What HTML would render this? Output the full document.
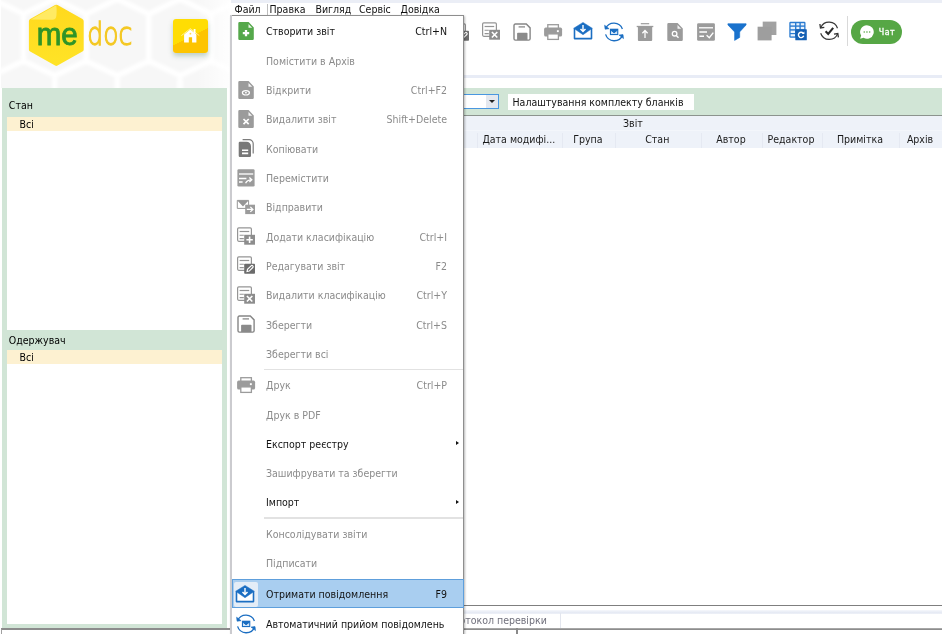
<!DOCTYPE html>
<html lang="uk"><head><meta charset="utf-8"><title>M.E.Doc</title>
<style>
html,body{margin:0;padding:0}
body{width:942px;height:634px;position:relative;overflow:hidden;background:#fff;font-family:"DejaVu Sans Condensed","DejaVu Sans","Liberation Sans",sans-serif;font-stretch:condensed;font-size:10.5px;color:#000;line-height:15px}
div,svg{position:absolute;box-sizing:border-box}
.ic{position:absolute;overflow:visible}
#hl{left:1.3px;top:0;width:228.7px;height:88px;background:#f7f7f7;overflow:hidden}
#lp{left:2px;top:88px;width:225px;height:540px;background:#d1e5d6}
.lbl{left:8.8px;white-space:nowrap}
.box{left:6.5px;width:215px;background:#fff}
.sel{left:6.5px;width:215px;height:14px;background:#fdf1d1}
.mb{top:2px;white-space:nowrap;color:#111}
#pop{left:230.2px;top:15px;width:233.8px;height:640px;background:#fff;border:1px solid #c9c9cf;border-left:none;border-top-color:#8e8e8e;border-right-color:#8e8e8e;box-shadow:1px 1px 2px rgba(0,0,0,.28)}
.mi{left:266px;white-space:nowrap;color:#131313;height:15px}
.mi.dis{color:#8b8b8b}
.mi.sc{left:auto;right:495px;text-align:right}
.arr{left:455.6px;width:0;height:0;border-left:3px solid #111;border-top:2.8px solid transparent;border-bottom:2.8px solid transparent}
.sep{left:264.3px;width:199px;height:1.2px;background:#e2e2e2}
.hl{left:232px;width:231.5px;height:29.4px;background:#a9cef0;border:1px solid #5e9fdc}
.hlic{left:233.5px;width:24px;height:24.5px;background:#e4edf7;border-radius:2px}
.ch{top:132px;width:80px;text-align:center;white-space:nowrap;color:#1a1a1a}
.cd{top:133px;width:1px;height:15px;background:#e5e9f2}
#root{left:0;top:0;width:942px;height:634px;will-change:transform;overflow:hidden}
</style></head><body>
<div id="root">

<!-- header left with honeycomb -->
<div id="hl">
<svg width="230" height="88" viewBox="0 0 230 88" style="left:0;top:0">
<defs><filter id="bl" x="-5%" y="-5%" width="110%" height="110%"><feGaussianBlur stdDeviation="1.4"/></filter></defs>
<path d="M-40.1 14V61M-40.1 14L-71.4 -1M-40.1 14L-8.8 -1M-40.1 61L-71.4 75.5M-40.1 61L-8.8 75.5M-8.8 75.5V92M22.5 14V61M22.5 14L-8.8 -1M22.5 14L53.8 -1M22.5 61L-8.8 75.5M22.5 61L53.8 75.5M53.8 75.5V92M85.1 14V61M85.1 14L53.8 -1M85.1 14L116.4 -1M85.1 61L53.8 75.5M85.1 61L116.4 75.5M116.4 75.5V92M147.7 14V61M147.7 14L116.4 -1M147.7 14L179.0 -1M147.7 61L116.4 75.5M147.7 61L179.0 75.5M179.0 75.5V92M210.3 14V61M210.3 14L179.0 -1M210.3 14L241.6 -1M210.3 61L179.0 75.5M210.3 61L241.6 75.5M241.6 75.5V92M272.9 14V61M272.9 14L241.6 -1M272.9 14L304.2 -1M272.9 61L241.6 75.5M272.9 61L304.2 75.5M304.2 75.5V92" fill="none" stroke="#fff" stroke-width="5.5" stroke-linecap="round" filter="url(#bl)"/>
</svg>
<div style="left:196px;top:0;width:34px;height:88px;background:linear-gradient(90deg,rgba(255,255,255,0),rgba(255,255,255,.9))"></div>
</div>

<!-- logo -->
<svg style="left:24px;top:0" width="120" height="72" viewBox="24 0 120 72">
<defs><linearGradient id="hx" x1="0" y1="0" x2="0" y2="1"><stop offset="0" stop-color="#ffd91e"/><stop offset="1" stop-color="#ffe326"/></linearGradient></defs>
<path d="M56.3 7.3L81.2 21.3V49.4L56.3 63.4 31.4 49.4V21.3z" fill="url(#hx)" stroke="url(#hx)" stroke-width="5" stroke-linejoin="round"/>
<path d="M31 19.6L56.2 5.2c.6 3 .6 7 .2 10.600a4.200 4.200 0 0 1-4.200 3.900z" fill="#ffea63"/>
<text x="36.8" y="44.6" font-family="'Liberation Sans','DejaVu Sans',sans-serif" font-size="31" fill="#2f9428" stroke="#2f9428" stroke-width=".9" textLength="41" lengthAdjust="spacingAndGlyphs">me</text>
<text x="87.3" y="44.8" font-family="'DejaVu Sans Light','DejaVu Sans','Liberation Sans',sans-serif" font-weight="200" font-size="32" fill="#f4c824" stroke="#f4c824" stroke-width="1.3" textLength="45" lengthAdjust="spacingAndGlyphs">doc</text>
</svg>

<!-- home button -->
<div style="left:173px;top:19px;width:35px;height:33.5px;border-radius:3px;background:linear-gradient(153.4deg,#ffdd03 0,#ffdd03 51%,#fdc400 51.8%,#fdc400 100%);box-shadow:0 3px 5px rgba(120,160,140,.45)"></div>
<svg style="left:180px;top:27px" width="20" height="18" viewBox="0 0 20 18">
<path d="M1.4 8.6L10.3 1.7l9 6.900" fill="none" stroke="#fff" stroke-width=".8" opacity=".75"/>
<path d="M10.3 2.6L16.4 7.500V15.400H12.100V10.200H8.800V15.400H4.100V7.500z" fill="#fff"/>
<rect x="13.700" y="2" width="1.800" height="4.500" fill="#fff"/>
<circle cx="10.400" cy="6.700" r=".9" fill="#ffd94d"/>
</svg>

<!-- left panel -->
<div id="lp"></div>
<div class="lbl" style="top:98.4px">Стан</div>
<div class="box" style="top:116.5px;height:213.5px"></div>
<div class="sel" style="top:116.5px"></div>
<div class="lbl" style="left:19.5px;top:116.8px">Всі</div>
<div class="lbl" style="top:332.8px">Одержувач</div>
<div class="box" style="top:349.5px;height:274.5px"></div>
<div class="sel" style="top:349.5px"></div>
<div class="lbl" style="left:19.5px;top:349.8px">Всі</div>
<!-- bottom status -->
<div style="left:1px;top:628px;width:229.5px;height:8px;border-top:2px solid #8c8c8c;border-left:1px solid #a0a0a0"></div>

<!-- top line / menu bar -->
<div style="left:231px;top:0;width:711px;height:2.6px;background:#ebeef6"></div>
<div class="mb" style="left:234.5px">Файл</div>
<div style="left:267px;top:3.5px;width:1px;height:11px;background:#bdbdbd"></div>
<div class="mb" style="left:269.5px">Правка</div>
<div class="mb" style="left:315.5px">Вигляд</div>
<div class="mb" style="left:359px">Сервіс</div>
<div class="mb" style="left:400.5px">Довідка</div>

<!-- toolbar -->
<svg class="ic" style="left:481.00px;top:21.40px" width="20" height="20" viewBox="0 0 20 20"><rect x="1.6" y="1.8" width="13.8" height="13.5" rx="1.2" fill="#fff" stroke="#959595" stroke-width="1.2"/><path d="M3.6 5.5h9.6" stroke="#959595" stroke-width="1.2"/><path d="M3.6 9.2h4.2M3.6 12.6h4.2" stroke="#959595" stroke-width="1.1"/><rect x="8.2" y="8.8" width="10.8" height="9.9" fill="#8d8d8d"/><path d="M10.9 11l5.4 5.5M16.3 11l-5.4 5.5" stroke="#fff" stroke-width="1.6"/></svg>
<svg class="ic" style="left:512.00px;top:21.70px" width="20" height="20" viewBox="0 0 20 20"><path d="M2 3.4a1.4 1.4 0 0 1 1.4-1.4H14.3l3.8 3.9V16.7a1.4 1.4 0 0 1-1.4 1.4H3.4a1.4 1.4 0 0 1-1.4-1.4z" fill="#fff" stroke="#868686" stroke-width="1.4"/><path d="M5.1 18V11.6a.9.9 0 0 1 .9-.9h8.6a.9.9 0 0 1 .9.9V18z" fill="#8a8a8a"/><path d="M6.6 4.9h6.4" stroke="#8a8a8a" stroke-width="1.3"/></svg>
<svg class="ic" style="left:542.60px;top:21.60px" width="20" height="20" viewBox="0 0 20 20"><rect x="4.8" y="2.7" width="10.6" height="5" fill="#fff" stroke="#9b9b9b" stroke-width="1.3"/><rect x="1.1" y="5.6" width="18" height="9" rx="1.6" fill="#9b9b9b"/><rect x="4.8" y="11.9" width="10.6" height="5.5" fill="#fff" stroke="#9b9b9b" stroke-width="1.3"/><rect x="13.9" y="8.2" width="1.9" height="1.9" fill="#fff"/></svg>
<svg class="ic" style="left:573.40px;top:21.30px" width="20" height="20" viewBox="0 0 20 20"><path d="M1.5 7.3V17.6H18.5V7.3" fill="#fff" stroke="#1b6ec2" stroke-width="1.6" stroke-linejoin="round"/><path d="M.7 7.3L10 1.4l9.3 5.9L10 13.7z" fill="#1b6ec2" stroke="#1b6ec2" stroke-width=".5" stroke-linejoin="round"/><path d="M10 3.9v6M7.5 7.9L10 10.5l2.5-2.6" stroke="#fff" stroke-width="1.4" fill="none"/></svg>
<svg class="ic" style="left:604.00px;top:21.50px" width="20" height="20" viewBox="0 0 20 20"><path d="M1.7 6.6A9 9 0 0 1 18.4 7M18.6 13A9 9 0 0 1 1.6 12.4" fill="none" stroke="#1b6ec2" stroke-width="1.3"/><path d="M.6 3.2l.5 4 4-.5z" fill="#1b6ec2" stroke="#1b6ec2" stroke-width=".6" stroke-linejoin="round"/><path d="M19.5 16.6l-.5-4-4 .5z" fill="#1b6ec2" stroke="#1b6ec2" stroke-width=".6" stroke-linejoin="round"/><rect x="5.9" y="6.7" width="8.4" height="6.4" fill="#1b6ec2"/><path d="M7 8.4l3.1 2.6 3.1-2.6v3.6H7z" fill="#cfe4f8"/><path d="M7 8.3l3.1 2.4 3.1-2.4" fill="none" stroke="#1b6ec2" stroke-width="1"/></svg>
<svg class="ic" style="left:634.80px;top:21.50px" width="20" height="20" viewBox="0 0 20 20"><path d="M2.9 5h14.3v13a1 1 0 0 1-1 1H3.9a1 1 0 0 1-1-1z" fill="#9b9b9b"/><path d="M1.7 4.5h16.6" stroke="#9b9b9b" stroke-width="1.3"/><path d="M5.8 1.7h8.4" stroke="#9b9b9b" stroke-width="1.2"/><path d="M10 16V8.600M7.400 11.200L10 8.500l2.600 2.700" stroke="#fff" stroke-width="1.250" fill="none"/></svg>
<svg class="ic" style="left:665.30px;top:21.60px" width="20" height="20" viewBox="0 0 20 20"><path d="M2.3 2.2a1.2 1.2 0 0 1 1.2-1.2H12.6l5.2 5.4V17.8a1.2 1.2 0 0 1-1.2 1.2H3.5a1.2 1.2 0 0 1-1.2-1.2z" fill="#9b9b9b"/><path d="M12.5 3.1v3.700h3.700z" fill="#fff" opacity=".88"/><circle cx="9.600" cy="11.700" r="2.300" fill="none" stroke="#fff" stroke-width="1.300"/><path d="M11.300 13.500l2.200 2.200" stroke="#fff" stroke-width="1.400"/></svg>
<svg class="ic" style="left:696.00px;top:21.70px" width="20" height="20" viewBox="0 0 20 20"><rect x="1.1" y="1.2" width="17.8" height="17.6" rx="1.3" fill="#9b9b9b"/><path d="M3 5.8h14" stroke="#fff" stroke-width="1.3"/><path d="M3.4 10h7.6M3.4 14.3h4.6" stroke="#fff" stroke-width="1.5"/><path d="M10.6 13.2l2.7 2.6 4-5.2" stroke="#fff" stroke-width="1.4" fill="none"/></svg>
<svg class="ic" style="left:726.70px;top:21.60px" width="20" height="20" viewBox="0 0 20 20"><path d="M.9 1.7H19.1V2.9L12.7 9.9v5.5L7.6 18.4V9.9L.9 2.9z" fill="#1a72cd" stroke="#1a72cd" stroke-width=".6" stroke-linejoin="round"/></svg>
<svg class="ic" style="left:757.30px;top:21.40px" width="20" height="20" viewBox="0 0 20 20"><rect x="5.7" y=".6" width="13.7" height="13.4" fill="#a2a2a2"/><rect x=".6" y="5.7" width="14" height="13.7" fill="#9e9e9e"/></svg>
<svg class="ic" style="left:787.70px;top:21.25px" width="20" height="20" viewBox="0 0 20 20"><rect x="1.3" y=".8" width="16.2" height="16" rx="1.2" fill="#2a7bd0"/><g fill="#e8f2fc"><rect x="2.6" y="2.2" width="4.4" height="2.2"/><rect x="8.4" y="2.2" width="3" height="2.2"/><rect x="12.8" y="2.2" width="3.4" height="2.2"/><rect x="2.6" y="5.8" width="4.4" height="2.4"/><rect x="8.4" y="5.8" width="3" height="2.4"/><rect x="12.8" y="5.8" width="3.4" height="2.4"/><rect x="2.6" y="9.6" width="4.4" height="2.4"/><rect x="2.6" y="13.2" width="4.4" height="2.2"/></g><rect x="7.3" y="8.2" width="11.5" height="11.1" rx=".6" fill="#1560b4"/><path d="M15.2 12.2a2.7 2.7 0 1 0 .5 2.6" fill="none" stroke="#fff" stroke-width="1.4"/><path d="M16.4 10.4v2.6h-2.6z" fill="#fff"/></svg>
<svg class="ic" style="left:818.80px;top:21.30px" width="20" height="20" viewBox="0 0 20 20"><path d="M1.9 6.2A9 9 0 0 1 18.5 7.2M18.7 12.6A9 9 0 0 1 1.7 12.2" fill="none" stroke="#3a3a3a" stroke-width="1.2"/><path d="M.9 3l.6 3.9 3.8-.6" fill="none" stroke="#333" stroke-width="1.3"/><path d="M19.4 16.4l-.6-3.9-3.8.6" fill="none" stroke="#333" stroke-width="1.3"/><path d="M6.6 10.2l2.6 2.7 5-6" fill="none" stroke="#2a2a2a" stroke-width="2.1"/></svg><svg class="ic" style="left:450.00px;top:21.50px" width="20" height="20" viewBox="0 0 20 20"><rect x="1.6" y="1.8" width="13.8" height="13.5" rx="1.2" fill="#fff" stroke="#959595" stroke-width="1.2"/><path d="M3.6 5.5h9.6" stroke="#959595" stroke-width="1.2"/><path d="M3.6 9.2h4.2M3.6 12.6h4.2" stroke="#959595" stroke-width="1.1"/><rect x="8.2" y="8.8" width="10.8" height="9.9" rx=".8" fill="#6b6b6b"/><path d="M11 16.6l.5-2.2 3.6-3.6a1.2 1.2 0 0 1 1.7 1.7l-3.6 3.6z" fill="none" stroke="#fff" stroke-width="1.1"/></svg>
<div style="left:846.5px;top:16px;width:1px;height:30px;background:#d9d9d9"></div>
<div style="left:851px;top:19.5px;width:51px;height:24.5px;border-radius:12.5px;background:#56a745"></div>
<svg style="left:859.35px;top:23.75px" width="15.9" height="15.9" viewBox="0 0 14 14"><path d="M7 1a6 6 0 1 1-3 11.2L1 13l.9-2.8A6 6 0 0 1 7 1z" fill="#fff"/><circle cx="4.6" cy="7" r=".7" fill="#56a745"/><circle cx="7" cy="7" r=".7" fill="#56a745"/><circle cx="9.4" cy="7" r=".7" fill="#56a745"/></svg>
<div style="left:878.8px;top:26.4px;font-size:8.8px;line-height:12px;color:#fff;white-space:nowrap;letter-spacing:.45px;-webkit-text-stroke:.3px #fff">Чат</div>
<div style="left:231px;top:75.2px;width:711px;height:2.7px;background:#e8ecf6"></div>

<!-- filter bar -->
<div style="left:231px;top:88px;width:711px;height:28px;background:#d1e5d6;border-bottom:1px solid #8c938e"></div>
<div style="left:380px;top:94px;width:118.8px;height:14.9px;background:#fff;border:1px solid #4a97e0"></div>
<div style="left:486px;top:95px;width:11.8px;height:12.9px;background:#e4e8ef"></div>
<div style="left:489.2px;top:99.9px;width:0;height:0;border-top:3.5px solid #222;border-left:3px solid transparent;border-right:3px solid transparent"></div>
<div style="left:507.5px;top:93.5px;width:186px;height:16.5px;background:#fff"></div>
<div style="left:512.5px;top:94.5px;white-space:nowrap;color:#111">Налаштування комплекту бланків</div>

<!-- table header -->
<div style="left:231px;top:116px;width:711px;height:32px;background:#eef2f9"></div>
<div style="left:231px;top:130px;width:711px;height:1px;background:#f3f6fb"></div>
<div class="ch" style="left:592.9px;top:115.5px">Звіт</div>
<div class="ch" style="left:478.79999999999995px">Дата модифі...</div>
<div class="ch" style="left:547.8px">Група</div>
<div class="ch" style="left:617.3px">Стан</div>
<div class="ch" style="left:691px">Автор</div>
<div class="ch" style="left:751px">Редактор</div>
<div class="ch" style="left:820px">Примітка</div>
<div class="ch" style="left:880px">Архів</div>
<div class="cd" style="left:476.5px"></div>
<div class="cd" style="left:561.5px"></div>
<div class="cd" style="left:615px"></div>
<div class="cd" style="left:701.3px"></div>
<div class="cd" style="left:761.5px"></div>
<div class="cd" style="left:822px"></div>
<div class="cd" style="left:899px"></div>

<!-- bottom tabs -->
<div style="left:231px;top:605px;width:711px;height:1px;background:#7f7f7f"></div>
<div style="left:231px;top:609.6px;width:711px;height:4px;background:linear-gradient(#f6f8fc,#e6eaf4 60%,#eef1f8)"></div>
<div style="left:446.3px;top:613px;white-space:nowrap;color:#70707c">Протокол перевірки</div>
<div style="left:559.5px;top:613px;width:1px;height:15px;background:#e3e6ee"></div>
<div style="left:464px;top:628px;width:478px;height:2px;background:linear-gradient(#b4b4b4,#808080)"></div>
<div style="left:516px;top:628px;width:2px;height:8px;background:#8a8a8a"></div>

<!-- popup menu -->
<div id="pop"></div>
<div style="left:230.1px;top:15px;width:1.6px;height:620px;background:#cbcbcf"></div>
<div class="mi" style="top:24.3px">Створити звіт</div>
<div class="mi sc" style="top:24.3px">Ctrl+N</div>
<svg class="ic" style="left:236.00px;top:21.00px" width="20" height="20" viewBox="0 0 20 20"><path d="M2.3 2.2a1.2 1.2 0 0 1 1.2-1.2H12.6l5.2 5.4V17.8a1.2 1.2 0 0 1-1.2 1.2H3.5a1.2 1.2 0 0 1-1.2-1.2z" fill="#55a84b"/><path d="M12.5 3.1v3.700h3.700z" fill="#fff" opacity=".88"/><path d="M10 8.9v6.4M6.8 12.1h6.4" stroke="#fff" stroke-width="2.3" fill="none"/></svg>
<div class="mi dis" style="top:53.5px">Помістити в Архів</div>
<div class="mi dis" style="top:82.5px">Відкрити</div>
<div class="mi dis sc" style="top:82.5px">Ctrl+F2</div>
<svg class="ic" style="left:236.00px;top:79.50px" width="20" height="20" viewBox="0 0 20 20"><path d="M2.3 2.2a1.2 1.2 0 0 1 1.2-1.2H12.6l5.2 5.4V17.8a1.2 1.2 0 0 1-1.2 1.2H3.5a1.2 1.2 0 0 1-1.2-1.2z" fill="#9b9b9b"/><path d="M12.5 3.1v3.700h3.700z" fill="#fff" opacity=".88"/><ellipse cx="9.9" cy="12.8" rx="3.5" ry="2.2" fill="none" stroke="#fff" stroke-width="1.2"/><ellipse cx="9.9" cy="12.8" rx="1.1" ry=".8" fill="#fff"/></svg>
<div class="mi dis" style="top:112.0px">Видалити звіт</div>
<div class="mi dis sc" style="top:112.0px">Shift+Delete</div>
<svg class="ic" style="left:236.00px;top:108.70px" width="20" height="20" viewBox="0 0 20 20"><path d="M2.3 2.2a1.2 1.2 0 0 1 1.2-1.2H12.6l5.2 5.4V17.8a1.2 1.2 0 0 1-1.2 1.2H3.5a1.2 1.2 0 0 1-1.2-1.2z" fill="#9b9b9b"/><path d="M12.5 3.1v3.700h3.700z" fill="#fff" opacity=".88"/><path d="M7.5 10l5.2 5.2M12.7 10l-5.2 5.2" stroke="#fff" stroke-width="1.7" fill="none"/></svg>
<div class="mi dis" style="top:141.5px">Копіювати</div>
<svg class="ic" style="left:236.00px;top:138.10px" width="20" height="20" viewBox="0 0 20 20"><path d="M6.6 1.7h6.6a4 4 0 0 1 4 4V15.4" fill="none" stroke="#7c7c7c" stroke-width="1.2"/><path d="M2.7 4.9a1.2 1.2 0 0 1 1.2-1.2H10.5a4.5 4.5 0 0 1 4.5 4.5V17.7a1.2 1.2 0 0 1-1.2 1.2H3.9a1.2 1.2 0 0 1-1.2-1.2z" fill="#787878"/><path d="M6 12.3h6.2M6 15.4h6.2" stroke="#fff" stroke-width="1.6"/></svg>
<div class="mi dis" style="top:170.5px">Перемістити</div>
<svg class="ic" style="left:236.40px;top:167.50px" width="20" height="20" viewBox="0 0 20 20"><rect x="1.4" y="1.3" width="17.2" height="17.3" rx="1.3" fill="#9b9b9b"/><path d="M3 6h14.2" stroke="#fff" stroke-width="1.3"/><path d="M3 10.6h7.4M3 13.9h3.6" stroke="#fff" stroke-width="1.5"/><path d="M9.6 15.2c1.2-2.6 3-3.4 5.6-3.4M13.4 9.6l2.4 2.2-2.4 2.2" stroke="#fff" stroke-width="1.3" fill="none"/></svg>
<div class="mi dis" style="top:200.0px">Відправити</div>
<svg class="ic" style="left:235.90px;top:196.90px" width="20" height="20" viewBox="0 0 20 20"><path d="M1.3 3.4h11.3v8H1.3z" fill="#fff" stroke="#959595" stroke-width="1"/><path d="M1.3 3.4l5.7 6 5.6-6z" fill="#959595"/><rect x="9.2" y="7.7" width="9.8" height="9.4" fill="#9b9b9b"/><path d="M10.8 12.4h6M14.3 9.9l2.6 2.5-2.6 2.5" stroke="#fff" stroke-width="1.3" fill="none"/></svg>
<div class="mi dis" style="top:229.5px">Додати класифікацію</div>
<div class="mi dis sc" style="top:229.5px">Ctrl+I</div>
<svg class="ic" style="left:236.00px;top:226.00px" width="20" height="20" viewBox="0 0 20 20"><rect x="1.6" y="1.8" width="13.8" height="13.5" rx="1.2" fill="#fff" stroke="#959595" stroke-width="1.2"/><path d="M3.6 5.5h9.6" stroke="#959595" stroke-width="1.2"/><path d="M3.6 9.2h4.2M3.6 12.6h4.2" stroke="#959595" stroke-width="1.1"/><rect x="8.2" y="8.8" width="10.8" height="9.9" fill="#8d8d8d"/><path d="M13.6 10.6v6.4M10.4 13.8h6.4" stroke="#fff" stroke-width="1.6"/></svg>
<div class="mi dis" style="top:258.5px">Редагувати звіт</div>
<div class="mi dis sc" style="top:258.5px">F2</div>
<svg class="ic" style="left:236.00px;top:255.30px" width="20" height="20" viewBox="0 0 20 20"><rect x="1.6" y="1.8" width="13.8" height="13.5" rx="1.2" fill="#fff" stroke="#959595" stroke-width="1.2"/><path d="M3.6 5.5h9.6" stroke="#959595" stroke-width="1.2"/><path d="M3.6 9.2h4.2M3.6 12.6h4.2" stroke="#959595" stroke-width="1.1"/><rect x="8.2" y="8.8" width="10.8" height="9.9" rx=".8" fill="#6b6b6b"/><path d="M11 16.6l.5-2.2 3.6-3.6a1.2 1.2 0 0 1 1.7 1.7l-3.6 3.6z" fill="none" stroke="#fff" stroke-width="1.1"/></svg>
<div class="mi dis" style="top:288.0px">Видалити класифікацію</div>
<div class="mi dis sc" style="top:288.0px">Ctrl+Y</div>
<svg class="ic" style="left:236.00px;top:284.60px" width="20" height="20" viewBox="0 0 20 20"><rect x="1.6" y="1.8" width="13.8" height="13.5" rx="1.2" fill="#fff" stroke="#959595" stroke-width="1.2"/><path d="M3.6 5.5h9.6" stroke="#959595" stroke-width="1.2"/><path d="M3.6 9.2h4.2M3.6 12.6h4.2" stroke="#959595" stroke-width="1.1"/><rect x="8.2" y="8.8" width="10.8" height="9.9" fill="#8d8d8d"/><path d="M10.9 11l5.4 5.5M16.3 11l-5.4 5.5" stroke="#fff" stroke-width="1.6"/></svg>
<div class="mi dis" style="top:317.5px">Зберегти</div>
<div class="mi dis sc" style="top:317.5px">Ctrl+S</div>
<svg class="ic" style="left:236.00px;top:314.30px" width="20" height="20" viewBox="0 0 20 20"><path d="M2 3.4a1.4 1.4 0 0 1 1.4-1.4H14.3l3.8 3.9V16.7a1.4 1.4 0 0 1-1.4 1.4H3.4a1.4 1.4 0 0 1-1.4-1.4z" fill="#fff" stroke="#868686" stroke-width="1.4"/><path d="M5.1 18V11.6a.9.9 0 0 1 .9-.9h8.6a.9.9 0 0 1 .9.9V18z" fill="#8a8a8a"/><path d="M6.6 4.9h6.4" stroke="#8a8a8a" stroke-width="1.3"/></svg>
<div class="mi dis" style="top:346.5px">Зберегти всі</div>
<div class="mi dis" style="top:378.0px">Друк</div>
<div class="mi dis sc" style="top:378.0px">Ctrl+P</div>
<svg class="ic" style="left:236.00px;top:375.00px" width="20" height="20" viewBox="0 0 20 20"><rect x="4.8" y="2.7" width="10.6" height="5" fill="#fff" stroke="#9b9b9b" stroke-width="1.3"/><rect x="1.1" y="5.6" width="18" height="9" rx="1.6" fill="#9b9b9b"/><rect x="4.8" y="11.9" width="10.6" height="5.5" fill="#fff" stroke="#9b9b9b" stroke-width="1.3"/><rect x="13.9" y="8.2" width="1.9" height="1.9" fill="#fff"/></svg>
<div class="mi dis" style="top:407.5px">Друк в PDF</div>
<div class="mi" style="top:436.5px">Експорт реєстру</div>
<div class="arr" style="top:441.1px"></div>
<div class="mi dis" style="top:466.0px">Зашифрувати та зберегти</div>
<div class="mi" style="top:495.0px">Імпорт</div>
<div class="arr" style="top:499.6px"></div>
<div class="mi dis" style="top:526.5px">Консолідувати звіти</div>
<div class="mi dis" style="top:556.0px">Підписати</div>
<div class="hl" style="top:579px"></div><div class="hlic" style="top:582px"></div>
<div class="mi" style="top:587.0px">Отримати повідомлення</div>
<div class="mi sc" style="top:587.0px">F9</div>
<svg class="ic" style="left:235.35px;top:583.50px" width="20" height="20" viewBox="0 0 20 20"><path d="M1.5 7.3V17.6H18.5V7.3" fill="#fff" stroke="#1b6ec2" stroke-width="1.6" stroke-linejoin="round"/><path d="M.7 7.3L10 1.4l9.3 5.9L10 13.7z" fill="#1b6ec2" stroke="#1b6ec2" stroke-width=".5" stroke-linejoin="round"/><path d="M10 3.9v6M7.5 7.9L10 10.5l2.5-2.6" stroke="#fff" stroke-width="1.4" fill="none"/></svg>
<div class="mi" style="top:616.5px">Автоматичний прийом повідомлень</div>
<svg class="ic" style="left:236.00px;top:613.60px" width="20" height="20" viewBox="0 0 20 20"><path d="M1.7 6.6A9 9 0 0 1 18.4 7M18.6 13A9 9 0 0 1 1.6 12.4" fill="none" stroke="#1b6ec2" stroke-width="1.3"/><path d="M.6 3.2l.5 4 4-.5z" fill="#1b6ec2" stroke="#1b6ec2" stroke-width=".6" stroke-linejoin="round"/><path d="M19.5 16.6l-.5-4-4 .5z" fill="#1b6ec2" stroke="#1b6ec2" stroke-width=".6" stroke-linejoin="round"/><rect x="5.9" y="6.7" width="8.4" height="6.4" fill="#1b6ec2"/><path d="M7 8.4l3.1 2.6 3.1-2.6v3.6H7z" fill="#cfe4f8"/><path d="M7 8.3l3.1 2.4 3.1-2.4" fill="none" stroke="#1b6ec2" stroke-width="1"/></svg>
<div class="sep" style="top:369.1px"></div>
<div class="sep" style="top:517.4px"></div>

</div>
</body></html>
